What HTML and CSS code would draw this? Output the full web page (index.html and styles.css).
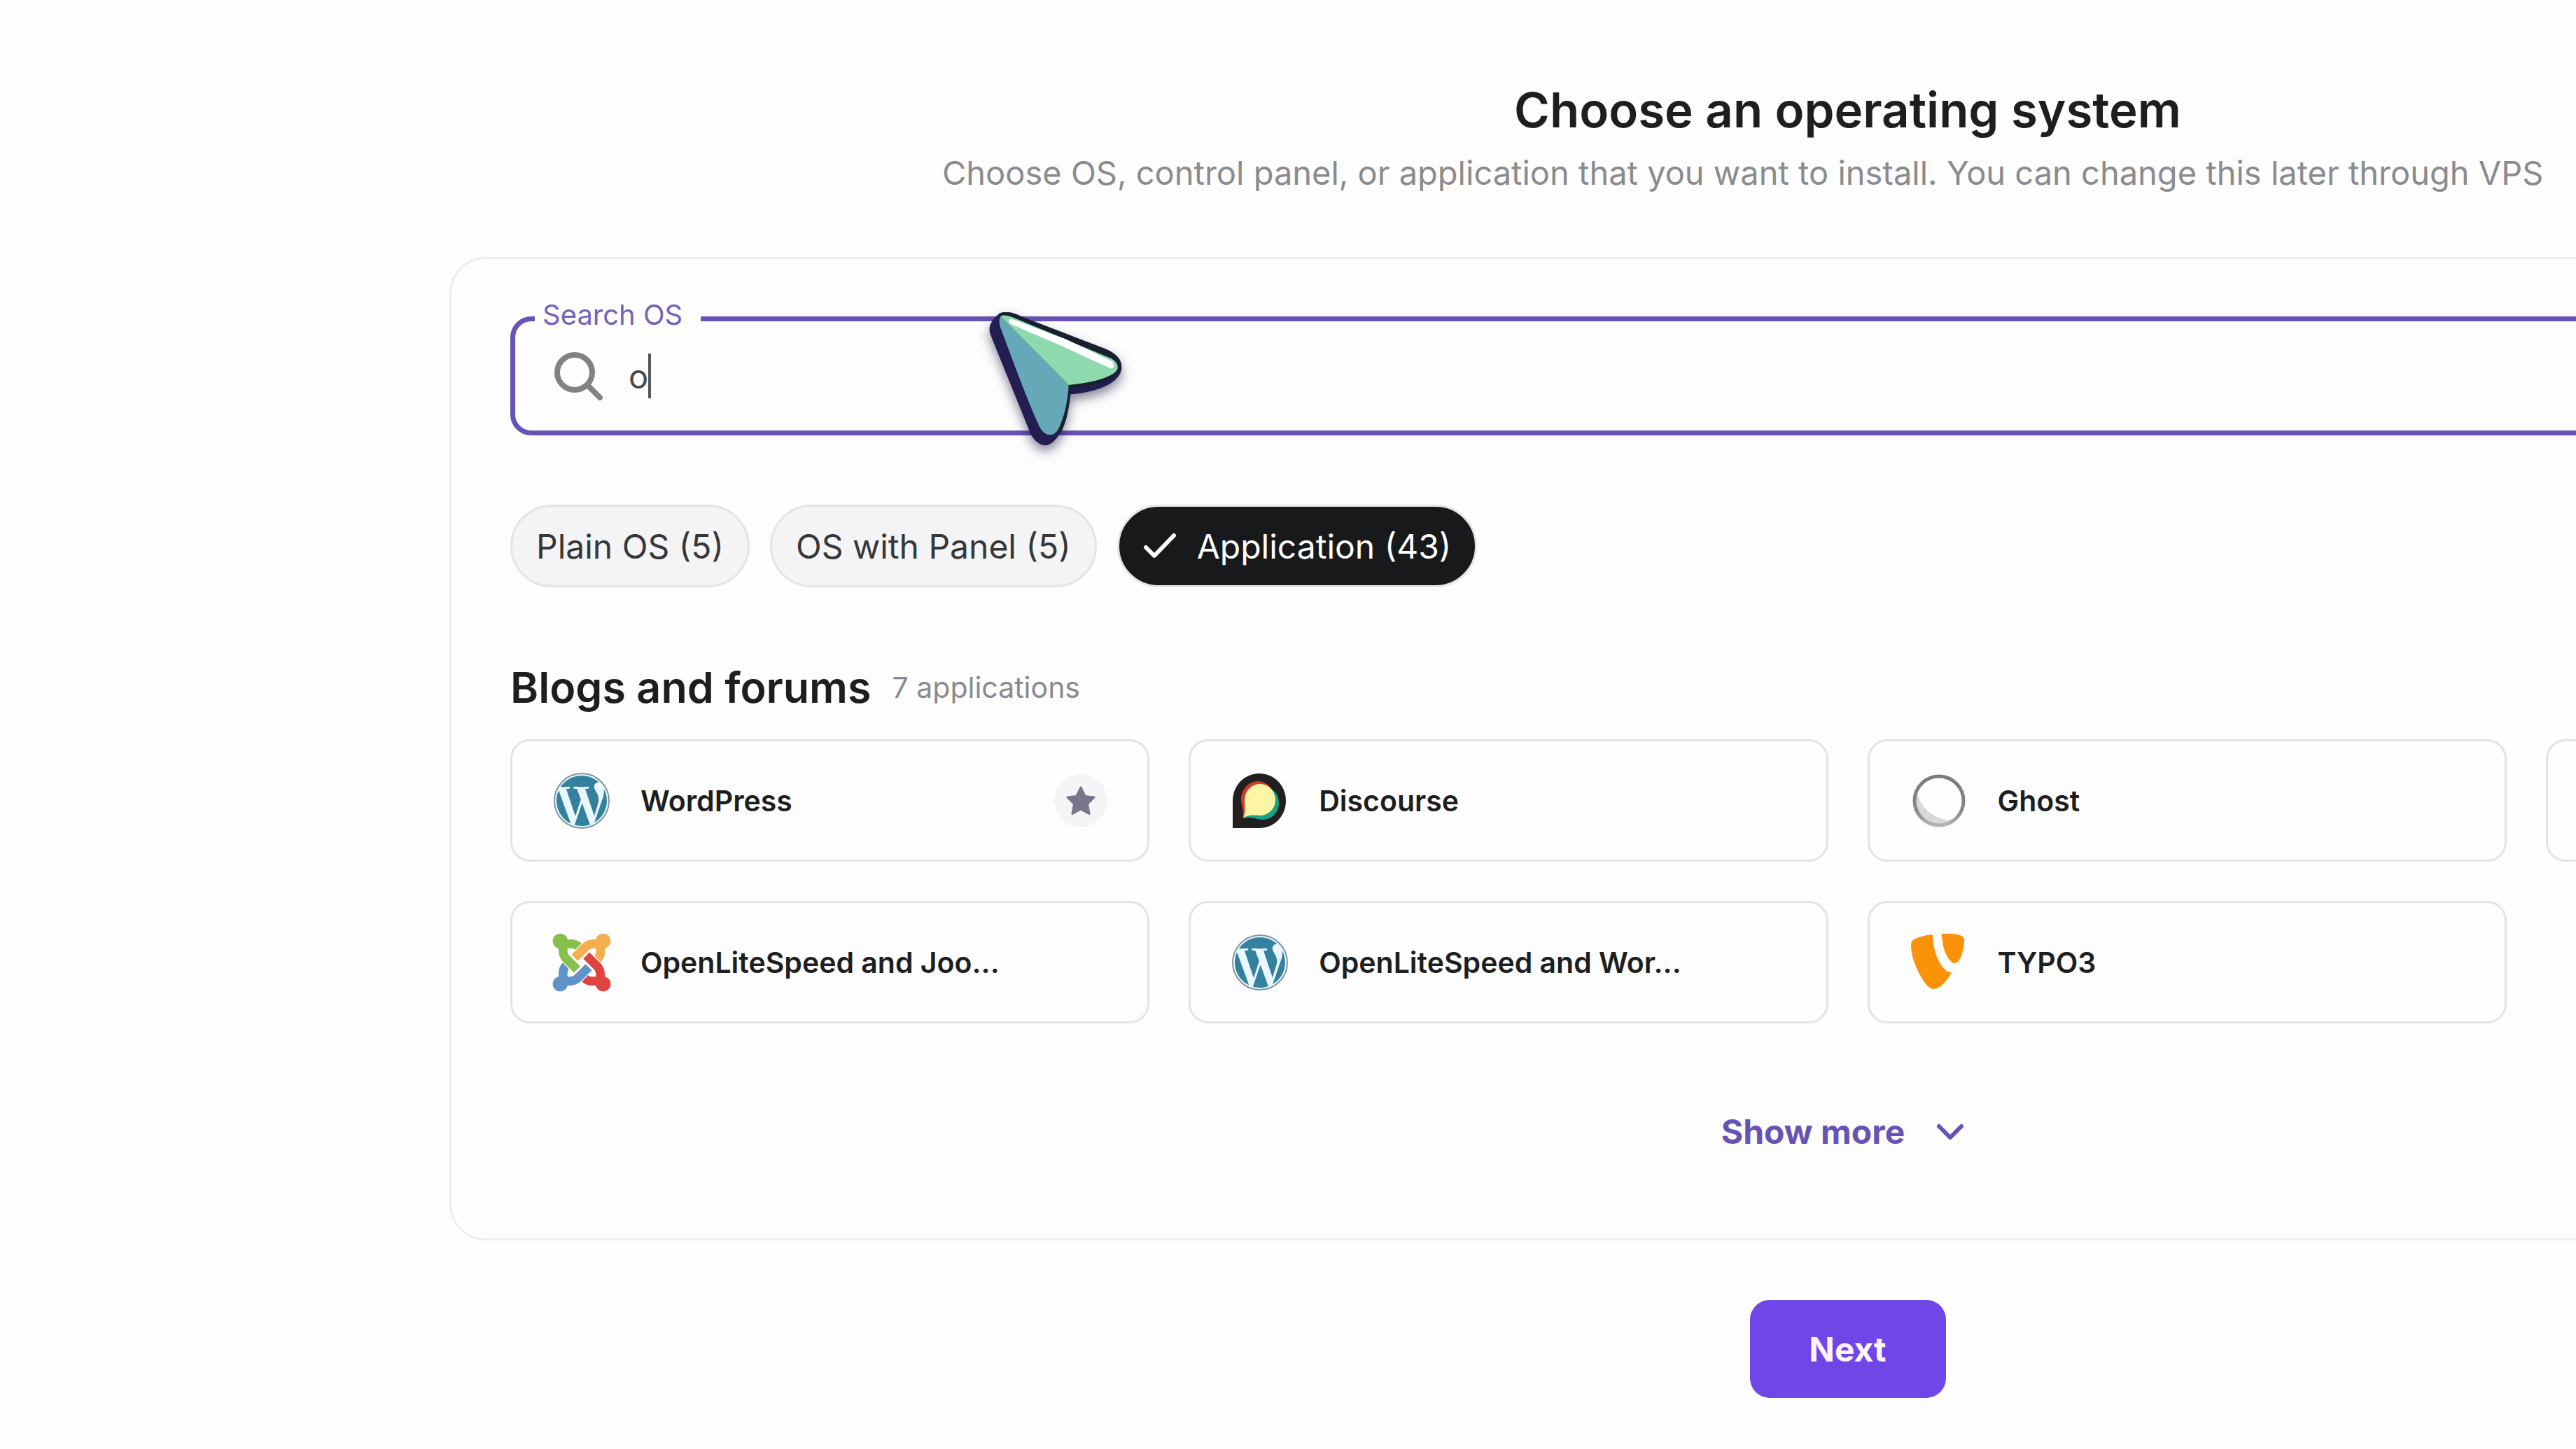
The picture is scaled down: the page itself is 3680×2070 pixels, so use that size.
FILE: index.html
```html
<!DOCTYPE html>
<html lang="en">
<head>
    <meta charset="UTF-8">
    <meta name="viewport" content="width=device-width, initial-scale=1.0">
    <title>Choose an operating system</title>
    <link rel="stylesheet" href="styles.css">
</head>
<body>
    <svg class="symbols" aria-hidden="true">
        <symbol id="wordpress" viewBox="0 0 24 24">
            <circle cx="12" cy="12" r="11.7" fill="#eaf8fe" stroke="#7f949d" stroke-width=".6"/>
            <path fill="#34809f" d="M21.469 6.825c.84 1.537 1.318 3.3 1.318 5.175 0 3.979-2.156 7.456-5.363 9.325l3.295-9.527c.615-1.54.82-2.771.82-3.864 0-.405-.026-.78-.07-1.11m-7.981.105c.647-.03 1.232-.105 1.232-.105.582-.075.514-.93-.067-.899 0 0-1.755.135-2.88.135-1.064 0-2.85-.15-2.85-.15-.585-.03-.661.855-.075.885 0 0 .54.061 1.125.09l1.68 4.605-2.37 7.08L5.354 6.9c.649-.03 1.234-.1 1.234-.1.585-.075.516-.93-.065-.896 0 0-1.746.138-2.874.138-.2 0-.438-.008-.69-.015C4.911 3.15 8.235 1.215 12 1.215c2.809 0 5.365 1.072 7.286 2.833-.046-.003-.091-.009-.141-.009-1.06 0-1.812.923-1.812 1.914 0 .89.513 1.643 1.06 2.531.411.72.89 1.643.89 2.977 0 .915-.354 1.994-.821 3.479l-1.075 3.585-3.9-11.61zM12 22.784c-1.059 0-2.081-.153-3.048-.437l3.237-9.406 3.315 9.087c.024.053.05.101.078.149-1.12.393-2.325.609-3.582.609M1.211 12c0-1.564.336-3.05.935-4.39L7.29 21.709C3.694 19.96 1.212 16.271 1.211 12"/>
        </symbol>
    </svg>

    <main class="page">
        <header class="header">
            <h1>Choose an operating system</h1>
            <p>Choose OS, control panel, or application that you want to install. You can change this later through VPS</p>
        </header>

        <section class="panel">
            <div class="search">
                <label class="search-label" for="search">Search OS</label>
                <svg class="search-icon" viewBox="0 0 70 70" fill="none" stroke="#808284" stroke-width="8" stroke-linecap="round">
                    <circle cx="29" cy="30" r="25"/>
                    <path d="M48 49L65 66"/>
                </svg>
                <input type="text" id="search" value="o">
                <span class="caret"></span>
            </div>

            <div class="chips">
                <button class="chip">Plain OS (5)</button>
                <button class="chip">OS with Panel (5)</button>
                <button class="chip active">
                    <svg class="check" viewBox="0 0 48 38" fill="none" stroke="#fff" stroke-width="6" stroke-linecap="round" stroke-linejoin="round">
                        <path d="M4 21L16 33L44 4"/>
                    </svg>
                    Application (43)
                </button>
            </div>

            <div class="section-title">
                <h2>Blogs and forums</h2>
                <span>7 applications</span>
            </div>

            <div class="cards">
                <button class="card">
                    <svg class="logo" viewBox="0 0 84 84"><use href="#wordpress" x="2" y="2" width="80" height="80"/></svg>
                    <span class="name">WordPress</span>
                    <span class="star">
                        <svg viewBox="0 0 44 42"><path fill="#77768a" stroke="#77768a" stroke-width="3" stroke-linejoin="round" d="M22 2L28 14.500L41 16L31.500 25.500L34 39.500L22 33L10 39.500L12.500 25.500L3 16L16 14.500Z"/></svg>
                    </span>
                </button>
                <button class="card">
                    <svg class="logo" viewBox="0 0 84 84">
                        <path fill="#231f20" d="M41 3C62 3 79 20 79 42S62 81 41 81H3V42C3 20 20 3 41 3Z"/>
                        <path fill="#c93f2a" d="M39 14C53 14 63 27 63 40S53 63 40 63C34 63 28 61 17 66C20 57 15 50 15 39C15 26 26 14 39 14Z"/>
                        <path fill="#17a287" d="M47 22C60 22 69 32 69 45S59 69 46 69C37 69 31 64 18 67C23 60 23 54 23 44C23 31 33 22 47 22Z"/>
                        <path fill="#fff5a4" d="M42 18C55 18 64 29 64 41S54 63 42 63C34 63 29 61 18 66C22 58 20 51 20 42C20 29 29 18 42 18Z"/>
                    </svg>
                    <span class="name">Discourse</span>
                </button>
                <button class="card">
                    <svg class="logo" viewBox="0 0 84 84">
                        <defs>
                            <linearGradient id="ghost-ring" x1="0" y1="0" x2="0" y2="1">
                                <stop offset="0" stop-color="#7a7a7a"/>
                                <stop offset=".7" stop-color="#888888"/>
                                <stop offset="1" stop-color="#b4b4b4"/>
                            </linearGradient>
                        </defs>
                        <circle cx="42" cy="42" r="35" fill="#d8d8d8"/>
                        <path fill="#fdfdfd" d="M42 7C62 7 76 22 76 42C76 56 67 67 55 70C32 66 14 50 11 29C17 15 28 7 42 7Z"/>
                        <circle cx="42" cy="42" r="35" fill="none" stroke="url(#ghost-ring)" stroke-width="5"/>
                    </svg>
                    <span class="name">Ghost</span>
                </button>
                <button class="card" aria-label="More"></button>
                <button class="card">
                    <svg class="logo" viewBox="0 0 252 252" fill="none" stroke-width="38">
                        <g stroke="#f3ae4e" transform="rotate(90 126 126)">
                            <circle cx="34" cy="34" r="32" fill="#f3ae4e" stroke="none"/>
                            <path d="M40 46H72Q98 44 112 58M46 40V74Q46 96 60 110L106 156"/>
                        </g>
                        <g stroke="#5f94c9" transform="rotate(-90 126 126)">
                            <circle cx="34" cy="34" r="32" fill="#5f94c9" stroke="none"/>
                            <path d="M40 46H72Q98 44 112 58M46 40V74Q46 96 60 110L106 156"/>
                        </g>
                        <g stroke="#86c04b">
                            <path stroke="#fff" stroke-width="46" d="M82 132L110 160"/>
                            <circle cx="34" cy="34" r="32" fill="#86c04b" stroke="none"/>
                            <path d="M40 46H72Q98 44 112 58M46 40V74Q46 96 60 110L106 156"/>
                        </g>
                        <g stroke="#e04440" transform="rotate(180 126 126)">
                            <path stroke="#fff" stroke-width="46" d="M82 132L110 160"/>
                            <circle cx="34" cy="34" r="32" fill="#e04440" stroke="none"/>
                            <path d="M40 46H72Q98 44 112 58M46 40V74Q46 96 60 110L106 156"/>
                        </g>
                    </svg>
                    <span class="name">OpenLiteSpeed and Joo...</span>
                </button>
                <button class="card">
                    <svg class="logo" viewBox="0 0 84 84"><use href="#wordpress" x="2" y="2" width="80" height="80"/></svg>
                    <span class="name">OpenLiteSpeed and Wor...</span>
                </button>
                <button class="card">
                    <svg class="logo" viewBox="-2 0 84 84" fill="#fb9208">
                        <path d="M31 2C31 28 44 56 58 56C51 70 40 80 32 80C20 80 0 40 0 18C0 14 1 11 3 10C8 6 20 3 31 2Z"/>
                        <path d="M44 1C62 0 76 2 76 9C76 24 71 43 62 43C55 43 45 24 45 10C44 6 43 3 44 1Z"/>
                    </svg>
                    <span class="name">TYPO3</span>
                </button>
            </div>

            <button class="show-more">
                Show more
                <svg viewBox="0 0 68 68" fill="none" stroke="#6752b5" stroke-width="6" stroke-linecap="round" stroke-linejoin="round">
                    <path d="M18 27L34 43L50 27"/>
                </svg>
            </button>
        </section>

        <button class="next">Next</button>
    </main>

    <svg class="pointer" viewBox="0 0 900 780" aria-hidden="true">
        <path fill="#241d52" d="M205 142C250 130 280 150 320 166L660 296C710 318 728 345 727 380C718 440 630 480 508 490C500 560 485 620 468 650C450 680 425 708 400 709C370 708 345 680 335 655L165 235C155 205 160 180 205 142Z"/>
        <path fill="#17212e" d="M205 142C250 130 280 150 320 166L660 296C710 318 728 345 726 372C715 425 620 455 510 462C505 540 490 610 470 645L440 660L200 160Z"/>
        <path fill="#65a8b8" d="M208 155L500 450C497 520 480 590 458 635C440 670 408 672 385 645C350 590 240 290 208 205C200 180 202 165 208 155Z"/>
        <path fill="#8fd9ae" d="M208 155C222 148 240 154 260 160L680 335C708 350 714 368 708 385C690 415 610 440 500 450Z"/>
        <path fill="none" stroke="#fff" stroke-width="22" stroke-linecap="round" stroke-linejoin="round" d="M255 178L480 262L680 358L682 368L480 275Z"/>
    </svg>
</body>
</html>
```
FILE: styles.css
```css
* {
    margin: 0;
    padding: 0;
    box-sizing: border-box;
}

body {
    position: relative;
    min-height: 100vh;
    overflow: hidden;
    background-color: #fdfdfd;
    font-family: Inter, "Open Sans", sans-serif;
    color: #1d1e20;
}

button, input {
    font-family: inherit;
    color: inherit;
    background: none;
    border: none;
    outline: none;
}

button {
    cursor: pointer;
}

.symbols {
    display: none;
}

/* The step is wider than the viewport and runs off its right edge */
.page {
    display: flex;
    flex-direction: column;
    margin: 0 -957px 0 642px;
    padding: 113px 0 72px;
}

.header {
    margin-bottom: 86px;
}

.header h1 {
    font-size: 69px;
    font-weight: 600;
    line-height: 88px;
    text-align: center;
    margin-bottom: 12px;
}

.header p {
    padding-left: 704px;
    font-size: 47px;
    line-height: 68px;
    color: #8a8b8d;
    white-space: nowrap;
}

.panel {
    display: flex;
    flex-direction: column;
    padding: 82px 84px 113px;
    border: 3px solid #eeeeee;
    border-radius: 52px;
}

.search {
    position: relative;
    display: flex;
    align-items: center;
    height: 170px;
    padding-left: 56px;
    border: 7px solid #6752b5;
    border-radius: 30px;
}

.search-label {
    position: absolute;
    top: -33px;
    left: 28px;
    padding: 0 26px 0 11px;
    background-color: #fdfdfd;
    font-size: 40px;
    line-height: 48px;
    color: #7462b8;
}

.search-icon {
    width: 70px;
    height: 70px;
    margin-right: 36px;
}

.search input {
    field-sizing: content;
    font-size: 47px;
    color: #4a4b4d;
}

.caret {
    width: 4px;
    height: 64px;
    background-color: #55565a;
}

.chips {
    display: flex;
    gap: 29px;
    margin-top: 99px;
}

.chip {
    display: flex;
    align-items: center;
    height: 118px;
    padding: 0 34px;
    border: 3px solid #e4e4e4;
    border-radius: 59px;
    background-color: #f4f4f4;
    font-size: 48px;
    color: #36373a;
}

.chip.active {
    background-color: #18191b;
    color: #ffffff;
}

.check {
    width: 48px;
    height: 38px;
    margin-right: 29px;
}

.section-title {
    display: flex;
    align-items: center;
    gap: 30px;
    margin: 103px 0 34px;
}

.section-title h2 {
    font-size: 61px;
    font-weight: 600;
    line-height: 80px;
}

.section-title span {
    font-size: 41px;
    color: #8a8b8d;
}

.cards {
    display: grid;
    grid-template-columns: repeat(4, 1fr);
    gap: 56px;
}

.card {
    display: flex;
    align-items: center;
    height: 175px;
    padding: 0 57px;
    border: 3px solid #e3e3e3;
    border-radius: 28px;
    text-align: left;
}

.logo {
    width: 84px;
    height: 84px;
    margin-right: 42px;
}

.name {
    font-size: 41px;
    font-weight: 600;
}

.star {
    display: flex;
    align-items: center;
    justify-content: center;
    width: 76px;
    height: 76px;
    margin-left: auto;
    border-radius: 50%;
    background-color: #f5f5f8;
}

.star svg {
    width: 44px;
    height: 42px;
}

.show-more {
    display: flex;
    align-items: center;
    align-self: center;
    gap: 31px;
    margin-top: 114px;
    height: 80px;
    font-size: 48px;
    font-weight: 700;
    color: #6752b5;
}

.show-more svg {
    width: 68px;
    height: 68px;
}

.next {
    align-self: center;
    width: 280px;
    height: 140px;
    margin-top: 85px;
    border-radius: 28px;
    background-color: #7146e6;
    font-size: 48px;
    font-weight: 700;
    color: #fff4ff;
}

/* Mouse pointer over the search box */
.pointer {
    position: absolute;
    top: 400px;
    left: 1360px;
    width: 300px;
    height: 260px;
    filter: drop-shadow(0 8px 8px rgba(20, 16, 60, 0.5));
}
```
